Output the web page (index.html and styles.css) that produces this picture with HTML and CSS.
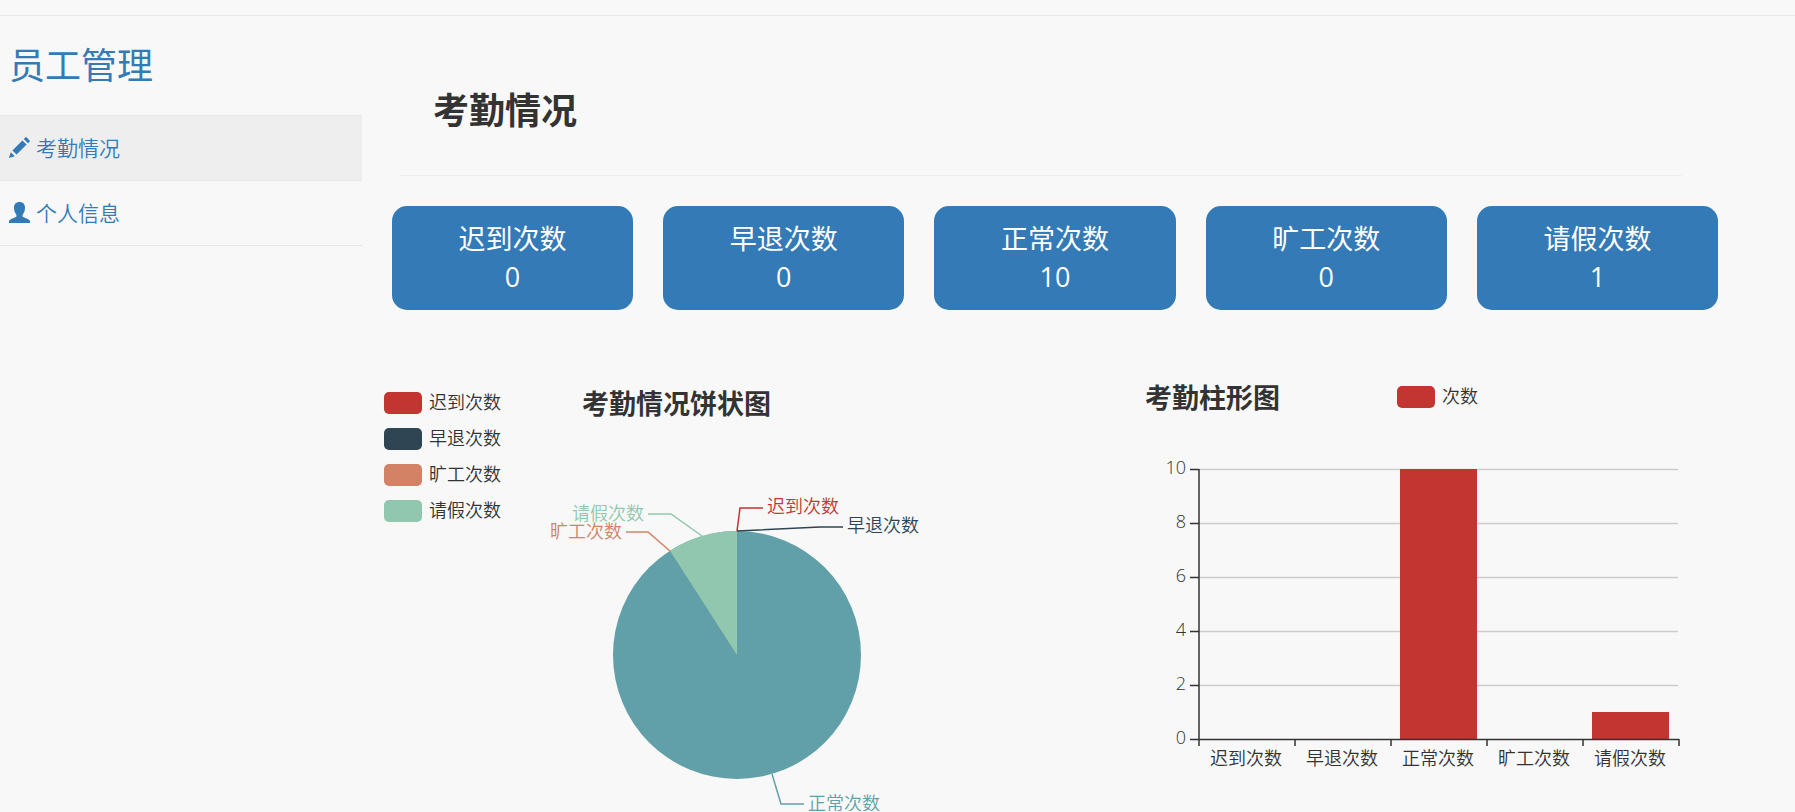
FILE: index.html
```html
<!DOCTYPE html>
<html lang="zh-CN">
<head>
<meta charset="utf-8">
<title>员工管理</title>
<link rel="stylesheet" href="styles.css">
</head>
<body>
<header class="topbar"></header>
<div class="layout">
  <nav class="sidebar">
    <a class="brand" href="#">员工管理</a>
    <ul class="menu">
      <li><a class="menu-link active" href="#">
        <svg class="icon" viewBox="0 0 21 21" aria-hidden="true"><path d="M0 21 L1.8 15.2 L5.8 19.2Z M3.4 13.4 L13.4 3.4 L17.6 7.6 L7.6 17.6Z M14.8 2 L16.2.6 Q17 -.2 17.8.6 L20.4 3.2 Q21.2 4 20.4 4.8 L19 6.2Z"/></svg>
        <span>考勤情况</span></a></li>
      <li><a class="menu-link" href="#">
        <svg class="icon" viewBox="0 0 21 21" aria-hidden="true"><path d="M10.5 0C14.200 0 16 2.300 16 5.800C16 8.800 15 11.200 13.600 12.700V14.700L19.300 17.200Q21 18 21 19.500V21H0V19.500Q0 18 1.700 17.200L7.400 14.700V12.700C6 11.200 5 8.800 5 5.800C5 2.300 6.800 0 10.500 0Z"/></svg>
        <span>个人信息</span></a></li>
    </ul>
  </nav>
  <main class="main">
    <h1 class="page-title">考勤情况</h1>
    <hr class="rule">
    <section class="cards">
      <div class="card"><div>迟到次数</div><div>0</div></div>
      <div class="card"><div>早退次数</div><div>0</div></div>
      <div class="card"><div>正常次数</div><div>10</div></div>
      <div class="card"><div>旷工次数</div><div>0</div></div>
      <div class="card"><div>请假次数</div><div>1</div></div>
    </section>
    <section class="charts">
      <svg class="chart" viewBox="0 0 709 450" role="img" aria-label="考勤情况饼状图">
        <g class="legend">
          <rect class="late" x="7" y="31" width="38" height="22" rx="5"/><text x="52" y="48">迟到次数</text>
          <rect class="early" x="7" y="67" width="38" height="22" rx="5"/><text x="52" y="84">早退次数</text>
          <rect class="absent" x="7" y="103" width="38" height="22" rx="5"/><text x="52" y="120">旷工次数</text>
          <rect class="leave" x="7" y="139" width="38" height="22" rx="5"/><text x="52" y="156">请假次数</text>
        </g>
        <text class="chart-title" x="205" y="53">考勤情况饼状图</text>
        <circle class="normal" cx="360" cy="294" r="124"/>
        <path class="leave" d="M360 294L293 189.700A124 124 0 0 1 360 170Z"/>
        <g class="leader">
          <path class="late-line" d="M360 170L363 147H386"/>
          <path class="early-line" d="M360 170L443 166H466"/>
          <path class="normal-line" d="M395 413L404 443H427"/>
          <path class="absent-line" d="M293 190L271 171H249"/>
          <path class="leave-line" d="M325 175L294 153H271"/>
        </g>
        <text class="late" x="390" y="152">迟到次数</text>
        <text class="early" x="470" y="171">早退次数</text>
        <text class="normal" x="431" y="449">正常次数</text>
        <text class="absent end" x="245" y="177">旷工次数</text>
        <text class="leave end" x="267" y="159">请假次数</text>
      </svg>
      <svg class="chart" viewBox="0 0 709 450" role="img" aria-label="考勤柱形图">
        <text class="chart-title" x="59" y="47">考勤柱形图</text>
        <rect class="late" x="311" y="25" width="38" height="22" rx="5"/>
        <text x="356" y="42">次数</text>
        <path class="grid" d="M113 108.500H592M113 162.500H592M113 216.500H592M113 270.500H592M113 324.500H592"/>
        <rect class="late" x="314" y="108" width="77" height="270"/>
        <rect class="late" x="506" y="351" width="77" height="27"/>
        <path class="axis" d="M113 108V385M104 378.500H593M104 108.500H113M104 162.500H113M104 216.500H113M104 270.500H113M104 324.500H113M209 378V385M305 378V385M401 378V385M497 378V385M593 378V385"/>
        <g class="end">
          <text x="100" y="113">10</text><text x="100" y="167">8</text><text x="100" y="221">6</text>
          <text x="100" y="275">4</text><text x="100" y="329">2</text><text x="100" y="383">0</text>
        </g>
        <g class="middle">
          <text x="160" y="404">迟到次数</text><text x="256" y="404">早退次数</text><text x="352" y="404">正常次数</text>
          <text x="448" y="404">旷工次数</text><text x="544" y="404">请假次数</text>
        </g>
      </svg>
    </section>
  </main>
</div>
</body>
</html>
```
FILE: styles.css
```css
* { box-sizing: border-box; }
body {
  margin: 0;
  background: #f8f8f8;
  color: #333;
  font-family: "Open Sans", "Noto Sans CJK SC", sans-serif;
}
a { color: #337ab7; text-decoration: none; }
.topbar { height: 16px; border-bottom: 1px solid #e7e7e7; }
.layout { display: grid; grid-template-columns: 362px 1fr; }
.brand {
  display: block;
  padding: 25px 9px 24px;
  font-size: 36px;
  line-height: 50px;
}
.menu { margin: 0; padding: 0; list-style: none; border-top: 1px solid #e7e7e7; }
.menu li { border-bottom: 1px solid #e7e7e7; }
.menu-link {
  display: flex;
  align-items: center;
  gap: 6px;
  height: 64px;
  padding: 0 9px 2px;
  font-size: 21px;
  font-weight: 350;
}
.menu-link.active { background: #eee; }
.icon { width: 21px; height: 21px; fill: #337ab7; }
.page-title {
  margin: 0;
  padding: 70px 71px 39px;
  font-size: 36px;
  line-height: 50px;
  font-weight: 700;
}
.rule { margin: 0 113px 0 38px; border: 0; border-top: 1px solid #eee; }
.cards {
  display: grid;
  grid-template-columns: repeat(5, 1fr);
  gap: 30px;
  padding: 30px 77px 0 30px;
}
.card {
  padding: 14px 0;
  border-radius: 15px;
  background: #337ab7;
  color: #fff;
  font-size: 27px;
  line-height: 38px;
  text-align: center;
}
.charts {
  display: grid;
  grid-template-columns: 1fr 1fr;
  padding: 51px 0 0 15px;
}
.chart { display: block; width: 100%; }
.chart text { font-size: 18px; font-weight: 350; fill: #333; }
.chart .chart-title { font-size: 27px; font-weight: 700; }
.chart .late { fill: #c23531; }
.chart .early { fill: #2f4554; }
.chart .normal { fill: #61a0a8; }
.chart .absent { fill: #d48265; }
.chart .leave { fill: #91c7ae; }
.end { text-anchor: end; }
.middle { text-anchor: middle; }
.leader path { fill: none; stroke-width: 1.500; }
.late-line { stroke: #c23531; }
.early-line { stroke: #2f4554; }
.normal-line { stroke: #61a0a8; }
.absent-line { stroke: #d48265; }
.leave-line { stroke: #91c7ae; }
.grid { stroke: #ccc; fill: none; stroke-width: 1.500; }
.axis { stroke: #333; fill: none; stroke-width: 1.500; }
```
